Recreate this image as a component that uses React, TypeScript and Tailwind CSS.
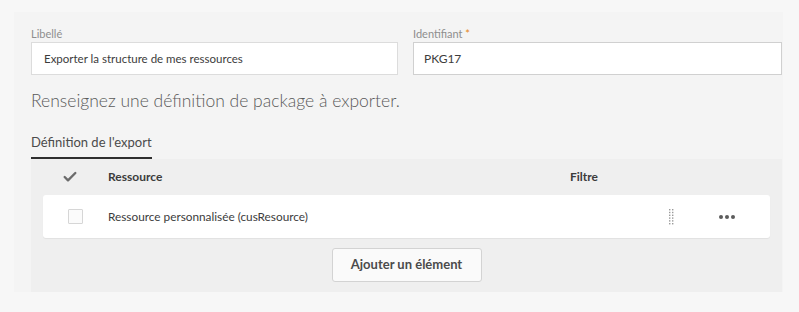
import { Check } from "lucide-react";

function DragHandle() {
  return (
    <svg width="6" height="16" viewBox="0 0 6 16" className="text-[#9a9a9a]">
      {[0, 1, 2, 3, 4, 5].map((r) =>
        [0, 1].map((c) => (
          <rect key={`${r}-${c}`} x={c * 3} y={r * 2.8} width="1.4" height="1.4" fill="currentColor" />
        )),
      )}
    </svg>
  );
}

export default function App() {
  return (
    <div className="w-[799px] h-[312px] bg-[#f7f7f7] pt-[12px] pl-[14px] font-['Lato',sans-serif] text-[#4b4b4b]">
      <div className="w-[769px] h-[280px] bg-[#f4f4f4] pl-[17px] pt-[14px]">
        <div className="flex gap-[15px]">
          <div className="flex flex-col">
            <label className="text-[11px] text-[#8e8e8e] leading-[16px]">Libellé</label>
            <div className="w-[367px] h-[33px] bg-white border border-[#dcdcdc] flex items-center pl-[12px] text-[11.5px] text-[#3c3c3c]">
              Exporter la structure de mes ressources
            </div>
          </div>
          <div className="flex flex-col">
            <label className="text-[11px] text-[#8e8e8e] leading-[16px]">
              Identifiant <span className="text-[#e68619]">*</span>
            </label>
            <div className="w-[369px] h-[33px] bg-white border border-[#d0d0d0] flex items-center pl-[10px] text-[12px] text-[#3c3c3c]">
              PKG17
            </div>
          </div>
        </div>

        <p className="mt-[15px] text-[17.5px] font-light text-[#5a5a5a] leading-[22px]">
          Renseignez une définition de package à exporter.
        </p>

        <div className="mt-[17px]">
          <div className="inline-block border-b-2 border-[#2f2f2f] pb-[6px] text-[13px] text-[#4b4b4b] leading-[17px]">
            Définition de l&apos;export
          </div>
        </div>

        <div className="w-[751px] bg-[#efefef] pb-[10px]">
          <div className="h-[36px] flex items-center text-[12px] font-bold text-[#3c3c3c]">
            <div className="w-[77px] flex justify-center">
              <Check size={16} strokeWidth={3.5} className="text-[#6b6b6b]" />
            </div>
            <div className="w-[462px]">Ressource</div>
            <div>Filtre</div>
          </div>
          <div className="mx-[12px] h-[43px] bg-white rounded-[3px] shadow-[0_1px_1px_rgba(0,0,0,0.06)] flex items-center">
            <div className="w-[65px] flex justify-center">
              <div className="w-[15px] h-[15px] border border-[#d6d6d6] bg-[#fbfbfb] rounded-[1px]" />
            </div>
            <div className="w-[561px] text-[11.8px] text-[#3c3c3c]">
              Ressource personnalisée (cusResource)
            </div>
            <DragHandle />
            <div className="ml-[44px] flex gap-[2px]">
              <span className="w-[4px] h-[4px] rounded-full bg-[#5c5c5c]" />
              <span className="w-[4px] h-[4px] rounded-full bg-[#5c5c5c]" />
              <span className="w-[4px] h-[4px] rounded-full bg-[#5c5c5c]" />
            </div>
          </div>
          <div className="flex justify-center mt-[10px]">
            <button className="w-[150px] h-[34px] bg-[#fafafa] border border-[#d3d3d3] rounded-[3px] text-[13px] font-bold text-[#4b4b4b]">
              Ajouter un élément
            </button>
          </div>
        </div>
      </div>
    </div>
  );
}
